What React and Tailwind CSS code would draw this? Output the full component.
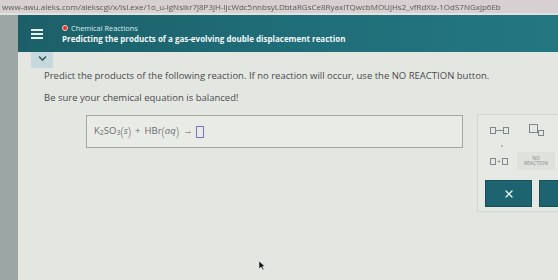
import { X } from 'lucide-react';

function Box({ className = '' }) {
  return <span className={`inline-block border border-[#5f6670] ${className}`} />;
}

export default function App() {
  return (
    <div className="relative h-[280px] w-[558px] overflow-hidden bg-[#e3e5e1] font-['Open_Sans',sans-serif]">
      {/* url bar */}
      <div className="flex h-[13px] items-center bg-[#d6d0d0] pl-[2px] text-[8px] leading-none text-[#5c5658] blur-[0.6px] whitespace-nowrap">
        www-awu.aleks.com/alekscgi/x/Isl.exe/1o_u-lgNslkr7j8P3jH-lJcWdc5nnbsyLDbtaRGsCe8RyaxlTQwcbMOUjHs2_vfRdXlz-1OdS7NGxjp6Eb
      </div>
      <div className="h-[2px] bg-[#e4e2e0]" />
      <div className="flex h-[265px]">
        <div className="w-[18px] shrink-0 bg-[#9ca6a4]" />
        <div className="flex min-w-0 flex-1 flex-col">
          {/* header */}
          <div className="flex h-[37px] shrink-0 items-center bg-gradient-to-r from-[#1c5f68] via-[#1f6d78] to-[#237780] pl-[12px]">
            <div className="flex w-[32px] flex-col gap-[2px] pl-[1px]">
              <span className="block h-[2px] w-[12px] bg-[#e6f0f0]" />
              <span className="block h-[2px] w-[12px] bg-[#e6f0f0]" />
              <span className="block h-[2px] w-[12px] bg-[#e6f0f0]" />
            </div>
            <div className="flex flex-col">
              <div className="flex items-center gap-[3px]">
                <span className="block h-[6px] w-[6px] rounded-full border border-[#f3d0c8] bg-[#d9342b]" />
                <span className="text-[7.4px] leading-[10px] text-[#dcebed]">Chemical Reactions</span>
              </div>
              <div className="text-[8px] font-bold leading-[12px] text-[#f2f7f7] whitespace-nowrap">
                Predicting the products of a gas-evolving double displacement reaction
              </div>
            </div>
          </div>
          {/* body */}
          <div className="relative flex-1 bg-[#e4e6e2]">
            <div className="ml-[13px] flex h-[16px] w-[22px] items-start justify-center bg-[#c6dadd]">
              <svg width="9" height="7" viewBox="0 0 9 7" className="mt-[3px]">
                <path d="M1 1.5 L4.5 5 L8 1.5" fill="none" stroke="#2f5f6a" strokeWidth="1.6" />
              </svg>
            </div>
            <div className="ml-[26px] mt-[2px] whitespace-nowrap text-[9.5px] leading-[12px] text-[#4a4c4c]">
              Predict the products of the following reaction. If no reaction will occur, use the NO REACTION button.
            </div>
            <div className="ml-[26px] mt-[10px] text-[9.5px] leading-[12px] text-[#4a4c4c]">
              Be sure your chemical equation is balanced!
            </div>
            <div className="mt-[11px] flex items-start">
              <div className="ml-[68px] flex h-[33px] w-[377px] shrink-0 items-center border border-[#a5a7a5] bg-[#e9ebe7] pl-[7px] text-[9.5px] text-[#6a6c6e]">
                <span>K</span>
                <sub className="text-[7px]">2</sub>
                <span>SO</span>
                <sub className="text-[7px]">3</sub>
                <span className="text-[12px] font-light">(</span>
                <span className="italic">s</span>
                <span className="text-[12px] font-light">)</span>
                <span className="mx-[4px]">+</span>
                <span>HBr</span>
                <span className="text-[12px] font-light">(</span>
                <span className="italic">aq</span>
                <span className="text-[12px] font-light">)</span>
                <span className="mx-[4px]">→</span>
                <span className="inline-block h-[12px] w-[8px] border border-[#7b72c8]" />
              </div>
              <div className="-mt-[1px] ml-[14px] flex h-[98px] w-[90px] shrink-0 flex-col border border-[#d3d5d1] bg-[#e6e8e4] pl-[6px] pt-[6px]">
                <div className="flex gap-[3px]">
                  <div className="flex h-[18px] w-[30px] items-center justify-center opacity-75">
                    <Box className="h-[7px] w-[6px]" />
                    <span className="block h-px w-[7px] bg-[#5f6670]" />
                    <Box className="h-[7px] w-[6px]" />
                  </div>
                  <div className="flex h-[18px] w-[38px] items-center justify-center opacity-75">
                    <Box className="-mt-[3px] h-[9px] w-[9px]" />
                    <Box className="mt-[5px] h-[6px] w-[6px]" />
                  </div>
                </div>
                <div className="ml-[17px] mt-[6px] h-[2px] w-[2px] bg-[#b8bab6]" />
                <div className="mt-[5px] flex gap-[3px]">
                  <div className="flex h-[18px] w-[30px] items-center justify-center gap-[1px] opacity-75">
                    <Box className="h-[7px] w-[6px]" />
                    <span className="text-[7px] leading-none text-[#555]">+</span>
                    <Box className="h-[7px] w-[6px]" />
                  </div>
                  <div className="flex h-[18px] w-[38px] flex-col items-center justify-center bg-[#dfe1dd] text-[5px] leading-[5.5px] text-[#8a8c8a]">
                    <span>NO</span>
                    <span>REACTION</span>
                  </div>
                </div>
                <div className="ml-[1px] mt-[10px] flex gap-[7px]">
                  <div className="flex h-[27px] w-[47px] shrink-0 items-center justify-center border border-[#16505a] bg-[#1d6470]">
                    <X size={12} strokeWidth={2.5} color="#e8f2f3" />
                  </div>
                  <div className="h-[27px] w-[40px] shrink-0 border border-[#16505a] bg-[#1d6470]" />
                </div>
              </div>
            </div>
          </div>
        </div>
      </div>
      {/* mouse cursor */}
      <svg width="8" height="11" viewBox="0 0 8 11" className="absolute left-[258px] top-[260px]">
        <path d="M1 1 L1 9 L3 7 L5 10 L6 9.5 L4.5 6.5 L7 6.5 Z" fill="#111" stroke="#eee" strokeWidth="0.6" />
      </svg>
    </div>
  );
}
